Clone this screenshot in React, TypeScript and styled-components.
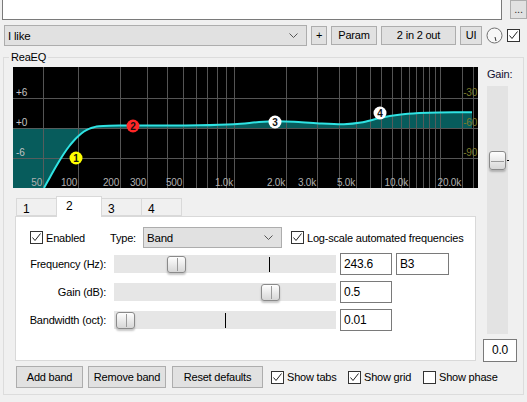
import React from 'react'
import styled, { createGlobalStyle } from 'styled-components'

const GlobalStyle = createGlobalStyle`
  html, body { margin: 0; padding: 0; background: #f0f0f0; }
  body {
    font-family: "Liberation Sans", Arial, sans-serif;
    font-size: 11px;
    letter-spacing: -0.2px;
    color: #000;
  }
  * { box-sizing: border-box; }
`

const Window = styled.div`
  width: 527px;
  height: 402px;
  overflow: hidden;
  background: #f0f0f0;
`

const TopRow = styled.div`
  display: flex;
  align-items: flex-start;
  gap: 8px;
  height: 20px;
  padding-left: 2px;
`

const NameBox = styled.div`
  width: 500px;
  height: 20px;
  background: #fff;
  border: 1px solid #7a7a7a;
  border-top: none;
`

const Button = styled.button<{ $w: number; $h?: number }>`
  width: ${(p) => p.$w}px;
  height: ${(p) => p.$h ?? 19}px;
  padding: 0;
  border: 1px solid #adadad;
  background: #e1e1e1;
  color: #000;
  font: inherit;
  letter-spacing: inherit;
  line-height: 1;
  flex: none;
`

const DotsButton = styled(Button)`
  display: flex;
  align-items: flex-end;
  justify-content: center;
  padding-bottom: 3px;
  color: #333;
`

const ToolRow = styled.div`
  display: flex;
  align-items: center;
  gap: 4px;
  height: 21px;
  margin-top: 5px;
  padding-left: 4px;
`

const Combo = styled.div<{ $w: number }>`
  width: ${(p) => p.$w}px;
  height: 21px;
  flex: none;
  display: flex;
  align-items: center;
  justify-content: space-between;
  padding: 0 8px 0 3px;
  border: 1px solid #adadad;
  background: #e1e1e1;
`

const ComboText = styled.span`
  font-size: 11.5px;
`

const Group = styled.div`
  position: relative;
  width: 521px;
  height: 338px;
  margin: 11px 0 0 3px;
  border: 1px solid #dcdcdc;
`

const Legend = styled.span`
  position: absolute;
  top: -7px;
  left: 5px;
  padding: 0 2px;
  line-height: 13px;
  background: #f0f0f0;
`

const GroupBody = styled.div`
  display: flex;
  padding: 9px 0 0 9px;
`

const MainCol = styled.div`
  width: 465px;
  flex: none;
`

const SideCol = styled.div`
  width: 35px;
  margin-left: 5px;
  display: flex;
  flex-direction: column;
`

const GainLabel = styled.div`
  line-height: 14px;
  padding-left: 4px;
  color: #101030;
`

const VTrack = styled.div`
  position: relative;
  width: 21px;
  height: 248px;
  margin: 5px 0 0 4px;
  background: #e3e3e3;
`

const Thumb = styled.div<{ $at: number; $vertical?: boolean }>`
  position: absolute;
  ${(p) => (p.$vertical ? `top: ${p.$at}px; left: 2px; width: 17px; height: 19px;` : `left: ${p.$at}px; top: 1px; width: 19px; height: 17px;`)}
  border: 1px solid #8a8a8a;
  border-radius: 3px;
  background: linear-gradient(#fefefe, #d6d6d6);
  box-shadow: 0 2px 2px rgba(0, 0, 0, 0.22);
  z-index: 1;

  &::after {
    content: '';
    position: absolute;
    background: #9a9a9a;
    ${(p) => (p.$vertical ? 'left: 1px; right: 1px; top: 50%; height: 1px;' : 'top: 1px; bottom: 1px; left: 50%; width: 1px;')}
  }
`

const VTick = styled.div`
  position: absolute;
  right: -1px;
  top: 74px;
  width: 2px;
  height: 1px;
  background: #000;
`

const ValueBox = styled.div`
  width: 34px;
  height: 23px;
  margin-top: 5px;
  border: 1px solid #7a7a7a;
  background: #fff;
  text-align: center;
  line-height: 20px;
  font-size: 12px;
`

const Graph = styled.svg`
  display: block;
  background: #000;
`

const TabStrip = styled.div`
  display: flex;
  align-items: flex-end;
  height: 20px;
  margin-top: 8px;
  padding-left: 4px;
`

const Tab = styled.div<{ $active?: boolean; $w: number }>`
  position: relative;
  width: ${(p) => p.$w}px;
  height: ${(p) => (p.$active ? 21 : 18)}px;
  margin-left: -1px;
  margin-bottom: ${(p) => (p.$active ? -1 : 0)}px;
  padding: ${(p) => (p.$active ? '3px 0 0 9px' : '4px 0 0 6px')};
  border: 1px solid #d9d9d9;
  border-bottom: ${(p) => (p.$active ? 'none' : '1px solid #d9d9d9')};
  background: ${(p) => (p.$active ? '#fff' : '#f0f0f0')};
  font-size: 12px;
  line-height: 12px;
  z-index: ${(p) => (p.$active ? 2 : 0)};
`

const Panel = styled.div`
  position: relative;
  width: 461px;
  height: 145px;
  margin-left: 2px;
  border: 1px solid #d9d9d9;
  background: #fff;
  padding: 10px 0 0 0;
`

const OptionRow = styled.div`
  display: flex;
  align-items: center;
  height: 21px;
  padding-left: 14px;
`

const CheckItem = styled.label<{ $w?: number; $gap?: number }>`
  display: flex;
  align-items: center;
  gap: 3px;
  flex: none;
  margin-left: ${(p) => p.$gap ?? 0}px;
  ${(p) => (p.$w ? `width: ${p.$w}px;` : '')}
  font-size: 11px;
`

const Box = styled.span`
  width: 13px;
  height: 13px;
  flex: none;
  border: 1px solid #333;
  background: #fff;
  display: flex;
  align-items: center;
  justify-content: center;
`

const TypeLabel = styled.span`
  width: 33px;
  flex: none;
`

const SliderGrid = styled.div`
  display: grid;
  grid-template-columns: 94px 222px 52px 53px;
  grid-auto-rows: 22px;
  column-gap: 4px;
  row-gap: 6px;
  margin-top: 5px;
  align-items: center;
`

const RowLabel = styled.div`
  text-align: right;
  padding-right: 4px;
`

const HTrack = styled.div`
  position: relative;
  height: 18px;
  background: #e6e6e6;
`

const Tick = styled.div<{ $at: number }>`
  position: absolute;
  left: ${(p) => p.$at}px;
  top: 2px;
  width: 1px;
  height: 15px;
  background: #000;
`

const Field = styled.div`
  height: 22px;
  border: 1px solid #7a7a7a;
  background: #fff;
  padding: 2px 0 0 3px;
  font-size: 12px;
  line-height: 16px;
`

const BottomRow = styled.div`
  display: flex;
  align-items: center;
  height: 22px;
  margin-top: 5px;
  padding-left: 3px;
`

const BottomButton = styled(Button)<{ $gap?: number }>`
  margin-left: ${(p) => p.$gap ?? 0}px;
`

function Check({ on }: { on?: boolean }) {
  return (
    <Box>
      {on && (
        <svg width="11" height="11" viewBox="0 0 11 11">
          <polyline points="1.5,5.5 4,8.5 9.5,1.5" fill="none" stroke="#222" strokeWidth="1" />
        </svg>
      )}
    </Box>
  )
}

function Chevron() {
  return (
    <svg width="9" height="5" viewBox="0 0 9 5">
      <polyline points="0.5,0.5 4.5,4.5 8.5,0.5" fill="none" stroke="#555" strokeWidth="1" />
    </svg>
  )
}

function Slider({ thumb, tick }: { thumb: number; tick: number }) {
  return (
    <HTrack>
      <Tick $at={tick} />
      <Thumb $at={thumb} />
    </HTrack>
  )
}

// graph geometry (pixels inside the black plot)
const GW = 465
const GH = 121
const ZERO = 61
const fx = (f: number) => 65 + 177.7 * Math.log10((f + 38) / 138)

const gridFreqs = [
  50, 100, 200, 300, 400, 500, 600, 700, 800, 900, 1000, 2000, 3000, 4000, 5000, 6000, 7000,
  8000, 9000, 10000, 11000, 12000, 13000, 14000, 15000, 20000,
]
const freqLabels: [number, string][] = [
  [50, '50'], [100, '100'], [200, '200'], [300, '300'], [500, '500'], [1000, '1.0k'],
  [2000, '2.0k'], [3000, '3.0k'], [5000, '5.0k'], [10000, '10.0k'], [20000, '20.0k'],
]

const curveAbs: [number, number][] = [
  [45, 188], [50, 179], [55, 170], [60, 161.5], [65, 153.5], [70, 146.5], [75, 140.5],
  [80, 135.5], [85, 131.5], [90, 128.8], [95, 127.2], [100, 126.3], [110, 125.7], [120, 125.5],
  [134, 125.6], [160, 125.6], [200, 125.3], [235, 124.2], [260, 122], [278, 121.3], [295, 121.8],
  [320, 123.4], [345, 124.2], [362, 122.6], [381, 118], [400, 114.8], [420, 113.1], [440, 112.4],
  [473, 112.2],
]
const curve = curveAbs.map(([x, y]) => [x - 14, y - 67] as [number, number])

function segments(pts: [number, number][]) {
  let d = ''
  for (let i = 0; i < pts.length - 1; i++) {
    const p0 = pts[i - 1] || pts[i]
    const p1 = pts[i]
    const p2 = pts[i + 1]
    const p3 = pts[i + 2] || p2
    const c1 = [p1[0] + (p2[0] - p0[0]) / 6, p1[1] + (p2[1] - p0[1]) / 6]
    const c2 = [p2[0] - (p3[0] - p1[0]) / 6, p2[1] - (p3[1] - p1[1]) / 6]
    d += ` C${c1[0].toFixed(2)},${c1[1].toFixed(2)} ${c2[0].toFixed(2)},${c2[1].toFixed(2)} ${p2[0]},${p2[1]}`
  }
  return d
}

const curveD = `M${curve[0][0]},${curve[0][1]}` + segments(curve)
const last = curve[curve.length - 1]
const fillD = `M0,${GH} L${curve[0][0]},${curve[0][1]}` + segments(curve) + ` L${last[0]},${ZERO} L0,${ZERO} Z`

const bands = [
  { n: '1', x: 63, y: 91, color: '#ffff00' },
  { n: '2', x: 120, y: 59, color: '#ff2626' },
  { n: '3', x: 262, y: 55, color: '#ffffff' },
  { n: '4', x: 367, y: 46, color: '#ffffff' },
]

function EqGraph() {
  return (
    <Graph width={GW} height={GH} viewBox={`0 0 ${GW} ${GH}`}>
      <path d={fillD} fill="#075c5c" />
      <g stroke="#5e5e5e" strokeWidth="1" opacity="0.9">
        {gridFreqs.map((f) => {
          const x = Math.round(fx(f)) + 0.5
          return <line key={f} x1={x} y1={0} x2={x} y2={GH} />
        })}
        <line x1={460.5} y1={0} x2={460.5} y2={GH} />
        {[31, 61, 91].map((y) => (
          <line key={y} x1={0} y1={y + 0.5} x2={GW} y2={y + 0.5} />
        ))}
      </g>
      <g fontSize="10" fill="#c4c4c4" fontFamily="Liberation Sans, Arial, sans-serif">
        <text x="3" y="29">+6</text>
        <text x="3" y="59">+0</text>
        <text x="3" y="89">-6</text>
        {freqLabels.map(([f, t]) => (
          <text key={t} x={Math.round(fx(f)) - 1} y="119" textAnchor="end" fill="#b0b0b0">
            {t}
          </text>
        ))}
      </g>
      <g fontSize="10" fill="#7c7c2c" fontFamily="Liberation Sans, Arial, sans-serif" textAnchor="end">
        <text x="464" y="29">-30</text>
        <text x="464" y="59">-60</text>
        <text x="464" y="89">-90</text>
      </g>
      <path d={curveD} fill="none" stroke="#2fe3e3" strokeWidth="2" />
      {bands.map((b) => (
        <g key={b.n}>
          <circle cx={b.x} cy={b.y} r="6.5" fill={b.color} />
          <text
            x={b.x}
            y={b.y + 3.6}
            textAnchor="middle"
            fontSize="10"
            fontWeight="bold"
            fill="#111"
            fontFamily="Liberation Sans, Arial, sans-serif"
          >
            {b.n}
          </text>
        </g>
      ))}
    </Graph>
  )
}

function Knob() {
  return (
    <svg width="17" height="17" viewBox="0 0 17 17" style={{ flex: 'none' }}>
      <circle cx="8.5" cy="8.5" r="7.5" fill="#f7f7f7" stroke="#707070" strokeWidth="1" />
      <line x1="9" y1="10" x2="10" y2="14" stroke="#333" strokeWidth="1" />
    </svg>
  )
}

export default function App() {
  return (
    <>
      <GlobalStyle />
      <Window>
        <TopRow>
          <NameBox />
          <DotsButton $w={17} $h={19}>...</DotsButton>
        </TopRow>

        <ToolRow>
          <Combo $w={303}>
            <ComboText>I like</ComboText>
            <Chevron />
          </Combo>
          <Button $w={16}>+</Button>
          <Button $w={46}>Param</Button>
          <Button $w={75}>2 in 2 out</Button>
          <Button $w={22}>UI</Button>
          <Knob />
          <Check on />
        </ToolRow>

        <Group>
          <Legend>ReaEQ</Legend>
          <GroupBody>
            <MainCol>
              <EqGraph />

              <TabStrip>
                <Tab $w={41}>1</Tab>
                <Tab $w={46} $active>2</Tab>
                <Tab $w={41}>3</Tab>
                <Tab $w={41}>4</Tab>
              </TabStrip>

              <Panel>
                <OptionRow>
                  <CheckItem $w={80}>
                    <Check on />
                    Enabled
                  </CheckItem>
                  <TypeLabel>Type:</TypeLabel>
                  <Combo $w={139}>
                    <ComboText>Band</ComboText>
                    <Chevron />
                  </Combo>
                  <CheckItem $gap={9}>
                    <Check on />
                    Log-scale automated frequencies
                  </CheckItem>
                </OptionRow>

                <SliderGrid>
                  <RowLabel>Frequency (Hz):</RowLabel>
                  <Slider thumb={53} tick={155} />
                  <Field>243.6</Field>
                  <Field>B3</Field>

                  <RowLabel>Gain (dB):</RowLabel>
                  <Slider thumb={147} tick={155} />
                  <Field>0.5</Field>
                  <span />

                  <RowLabel>Bandwidth (oct):</RowLabel>
                  <Slider thumb={2} tick={111} />
                  <Field>0.01</Field>
                  <span />
                </SliderGrid>
              </Panel>

              <BottomRow>
                <BottomButton $w={67} $h={22}>Add band</BottomButton>
                <BottomButton $w={78} $h={22} $gap={5}>Remove band</BottomButton>
                <BottomButton $w={91} $h={22} $gap={6}>Reset defaults</BottomButton>
                <CheckItem $w={77} $gap={8}>
                  <Check on />
                  Show tabs
                </CheckItem>
                <CheckItem $w={75}>
                  <Check on />
                  Show grid
                </CheckItem>
                <CheckItem>
                  <Check />
                  Show phase
                </CheckItem>
              </BottomRow>
            </MainCol>

            <SideCol>
              <GainLabel>Gain:</GainLabel>
              <VTrack>
                <Thumb $vertical $at={65} />
                <VTick />
              </VTrack>
              <ValueBox>0.0</ValueBox>
            </SideCol>
          </GroupBody>
        </Group>
      </Window>
    </>
  )
}
